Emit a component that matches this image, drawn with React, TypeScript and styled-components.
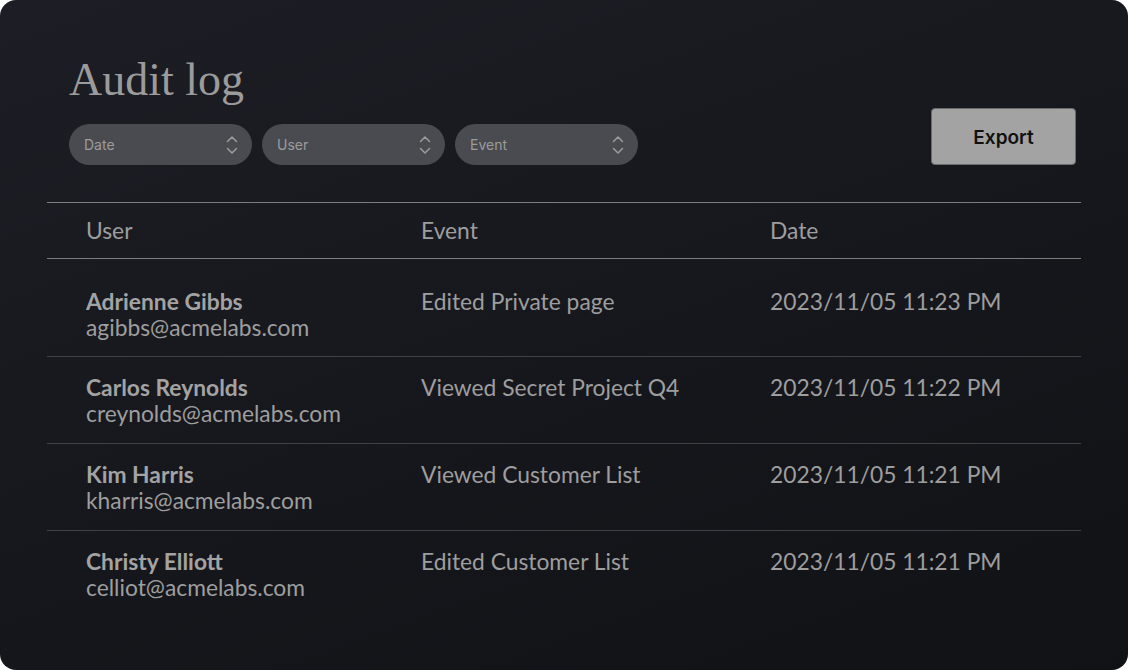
import React from 'react';
import styled, { createGlobalStyle } from 'styled-components';

const GlobalStyle = createGlobalStyle`
  html, body {
    margin: 0;
    padding: 0;
    background: #ffffff;
  }
  * {
    box-sizing: border-box;
  }
`;

const Card = styled.div`
  width: 1128px;
  height: 670px;
  border-radius: 16px;
  background: linear-gradient(160deg, #1d1e25 0%, #16171c 55%, #111216 100%);
  padding: 54px 47px 0;
  overflow: hidden;
`;

const Toolbar = styled.div`
  display: flex;
  justify-content: space-between;
  align-items: flex-end;
  padding: 0 5px 0 22px;
`;

const TitleBlock = styled.div`
  display: flex;
  flex-direction: column;
  gap: 18px;
`;

const Title = styled.h1`
  margin: 0;
  font-family: 'Liberation Serif', 'Times New Roman', serif;
  font-weight: 400;
  font-size: 46px;
  line-height: 52px;
  color: #9b9b9b;
`;

const Filters = styled.div`
  display: flex;
  gap: 10px;
`;

const Pill = styled.button`
  width: 183px;
  height: 41px;
  border: none;
  border-radius: 21px;
  background: #4a4b50;
  display: flex;
  align-items: center;
  justify-content: space-between;
  padding: 0 14px 0 15px;
  font-family: Inter, 'Liberation Sans', sans-serif;
  font-size: 14px;
  color: #9c9c9c;
  cursor: pointer;
`;

const ExportButton = styled.button`
  width: 145px;
  height: 57px;
  border: 1px solid #6b6b6b;
  border-radius: 4px;
  background: #a3a3a3;
  padding: 2px 0 0;
  font-family: Inter, 'Liberation Sans', sans-serif;
  font-weight: 600;
  font-size: 19px;
  color: #111111;
  cursor: pointer;
`;

const Table = styled.div`
  margin-top: 37px;
  font-family: Lato, 'Liberation Sans', sans-serif;
  font-size: 22.8px;
  line-height: 26px;
  color: #9e9e9e;
`;

const Row = styled.div<{ $head?: boolean; $first?: boolean; $last?: boolean }>`
  display: grid;
  grid-template-columns: 335px 349px 1fr;
  align-items: ${(p) => (p.$head ? 'center' : 'start')};
  height: ${(p) => (p.$head ? '57px' : 'auto')};
  padding: ${(p) => (p.$head ? '0 0 1px' : p.$first ? '29px 0 16px' : '17px 0 17px')};
  border-top: ${(p) => (p.$head ? '1px solid #7d7d7f' : 'none')};
  border-bottom: ${(p) =>
    p.$head ? '1px solid #7d7d7f' : p.$last ? 'none' : '1px solid #404146'};
`;

const Cell = styled.div`
  padding-left: 39px;
  white-space: nowrap;
`;

const Name = styled.div`
  font-weight: 700;
  color: #a3a3a3;
`;

const Email = styled.div`
  color: #9e9e9e;
`;

function UpDownIcon() {
  return (
    <svg width="12" height="20" viewBox="0 0 12 20" fill="none" stroke="#9c9c9c" strokeWidth="1.5" strokeLinecap="round" strokeLinejoin="round">
      <path d="M1.5 6.5 6 2l4.5 4.5" />
      <path d="M1.5 13.5 6 18l4.5-4.5" />
    </svg>
  );
}

const filters = ['Date', 'User', 'Event'];

const entries = [
  { name: 'Adrienne Gibbs', email: 'agibbs@acmelabs.com', event: 'Edited Private page', date: '2023/11/05 11:23 PM' },
  { name: 'Carlos Reynolds', email: 'creynolds@acmelabs.com', event: 'Viewed Secret Project Q4', date: '2023/11/05 11:22 PM' },
  { name: 'Kim Harris', email: 'kharris@acmelabs.com', event: 'Viewed Customer List', date: '2023/11/05 11:21 PM' },
  { name: 'Christy Elliott', email: 'celliot@acmelabs.com', event: 'Edited Customer List', date: '2023/11/05 11:21 PM' },
];

export default function App() {
  return (
    <>
      <GlobalStyle />
      <Card>
        <Toolbar>
          <TitleBlock>
            <Title>Audit log</Title>
            <Filters>
              {filters.map((f) => (
                <Pill key={f}>
                  {f}
                  <UpDownIcon />
                </Pill>
              ))}
            </Filters>
          </TitleBlock>
          <ExportButton>Export</ExportButton>
        </Toolbar>
        <Table>
          <Row $head>
            <Cell>User</Cell>
            <Cell>Event</Cell>
            <Cell>Date</Cell>
          </Row>
          {entries.map((e, i) => (
            <Row key={e.email} $first={i === 0} $last={i === entries.length - 1}>
              <Cell>
                <Name>{e.name}</Name>
                <Email>{e.email}</Email>
              </Cell>
              <Cell>{e.event}</Cell>
              <Cell>{e.date}</Cell>
            </Row>
          ))}
        </Table>
      </Card>
    </>
  );
}
